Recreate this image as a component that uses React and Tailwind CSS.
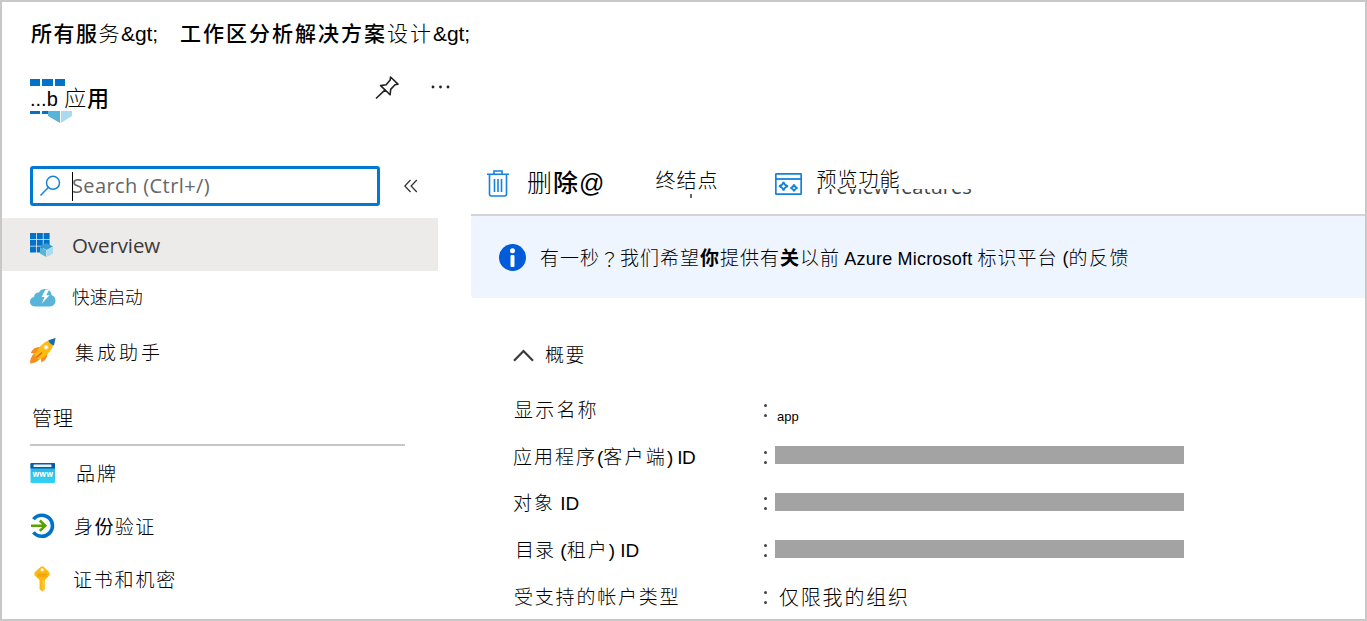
import clsx from 'clsx';

const details = [
  { parts: [['显示名称', 'tracking-[2.2px]']], value: 'app' },
  {
    parts: [
      ['应用程序', 'tracking-[2px] -ml-px'],
      ['(', 'text-[19px] font-normal'],
      ['客户端', 'tracking-[2.2px]'],
      [') ID', 'text-[19px] font-normal tracking-[-0.6px]'],
    ],
  },
  { parts: [['对象', 'tracking-[2px] -ml-px'], [' ID', 'text-[19px] font-normal']] },
  {
    parts: [
      ['目录', 'tracking-[1px] ml-px'],
      [' (', 'text-[19px] font-normal'],
      ['租户', 'tracking-[2px]'],
      [') ID', 'text-[19px] font-normal'],
    ],
  },
  { parts: [['受支持的帐户类型', 'tracking-[1.800px]']], value: '仅限我的组织' },
];

function Parts({ items }) {
  return items.map(([text, className], i) => (
    <span key={i} className={clsx('whitespace-pre', className)}>{text}</span>
  ));
}

function GridIcon() {
  return (
    <svg width="24" height="24" viewBox="0 0 24 24">
      <g fill="#0072c9">
        <path d="M0 0h6v6H0zM6.800 0h6v6h-6zM13.600 0h6v6h-6zM0 6.800h6v6H0zM6.800 6.800h6v6h-6zM13.600 6.800h6v6h-6zM0 13.600h6v6H0zM6.800 13.600h6v6h-6z" />
      </g>
      <path d="M10 13.500l6.500-3.500 6.500 3.500-6.500 3.400z" fill="#349dcb" />
      <path d="M10 13.900l6.200 3.300V24L10 20.600z" fill="#59b4d9" />
      <path d="M23 13.900l-6.200 3.300V24l6.200-3.400z" fill="#a9daed" />
    </svg>
  );
}

function CloudIcon() {
  return (
    <svg width="26" height="20" viewBox="0 0 26 20">
      <path d="M5 18.500c-3 0-5-2-5-4.700C0 11.200 1.700 9.300 4 9c.1-2.900 2.200-4.800 5-4.600C10.200 2 12.500 1 15 1c4 0 6.500 2.700 6.700 6.300C24 8 25.500 10 25.500 12.600c0 3.500-2.500 5.900-5.700 5.900z" fill="#59b4d9" />
      <path d="M15.500 1.500L11.500 9h3L11.800 15.500l7.700-8.300h-3.300l3-5.400z" fill="#fff" />
    </svg>
  );
}

function RocketIcon() {
  return (
    <svg width="26" height="26" viewBox="0 0 26 26">
      <path d="M10.500 9C6 8.500 2.500 10.500.7 15l6 1zM17 15c.8 4-1 7-5.500 9.500L10.500 19z" fill="#f78d1e" />
      <path d="M4.500 15.500C1.500 17.500.2 20.500 0 25.500c4-.3 7.500-1.300 9.800-4.500z" fill="#f78d1e" />
      <path d="M4.500 17.500C8 9.500 14 2.500 25.300.3 23.500 11.500 17.500 18 8.800 21.700z" fill="#fdbb12" />
      <path d="M18.300 2.500L25.500 0 24 7.500c-2.300-.5-4.700-2.400-5.700-5z" fill="#0f6cbd" />
      <circle cx="16" cy="9.300" r="2.200" fill="#fff" stroke="#f6ce62" />
      <path d="M6.500 19.500l5.500-5" stroke="#d9620d" strokeWidth="1.400" />
    </svg>
  );
}

function BrandIcon() {
  return (
    <svg width="26" height="20" viewBox="0 0 26 20">
      <defs>
        <linearGradient id="brand" x1="0" y1="0" x2="0" y2="1">
          <stop offset="0" stopColor="#26aee0" />
          <stop offset="1" stopColor="#32d4f5" />
        </linearGradient>
      </defs>
      <rect x=".5" width="24.500" height="20" rx="1" fill="url(#brand)" />
      <path d="M1.500 0H24a1 1 0 011 1v4.500H.5V1a1 1 0 011-1z" fill="#0a5ba6" />
      <rect x="3.500" y="1.500" width="18" height="2.400" rx=".5" fill="#e8f3fa" />
      <text x="12.800" y="14.200" textAnchor="middle" fontFamily="Open Sans, sans-serif" fontWeight="700" fontSize="8" fill="#fff">www</text>
    </svg>
  );
}

function AuthIcon() {
  return (
    <svg width="26" height="26" viewBox="0 0 26 26" fill="none">
      <path d="M3.500 6.200C5.500 3.500 8.500 2.200 12 2.200a10.500 10.500 0 010 21c-3.500 0-6.500-1.300-8.500-4" stroke="#0072c9" strokeWidth="3.600" />
      <path d="M1 12.700h14M9.800 7.500l5.500 5.200-5.500 5.200" stroke="#57a300" strokeWidth="2.600" />
    </svg>
  );
}

function KeyIcon() {
  return (
    <svg width="26" height="26" viewBox="0 0 26 26">
      <path d="M10.500 1c1-1 2.500-1 3.500 0l5 5c1 1.200 1 2.500 0 3.700L15 14v9l-2.700 2.700L9.500 23v-9L5 9.700C4 8.500 4 7.200 5 6z" fill="#fdb913" />
      <path d="M7.500 7.800h9.500v1H7.500zM7.500 9.600h9.500v.8H7.500z" fill="#eb9a06" />
      <path d="M12.500 14H15v9l-2.500 2z" fill="#ffca3a" />
      <circle cx="12.200" cy="3.800" r="1.600" fill="#fff" />
    </svg>
  );
}

function NavItem({ icon, children, className }) {
  return (
    <div className="h-[53px] pl-7 flex items-center">
      <span className="w-[26px] flex shrink-0">{icon}</span>
      <span className={clsx('whitespace-nowrap', className)}>{children}</span>
    </div>
  );
}

function Sidebar() {
  return (
    <aside className="w-[436px] shrink-0">
      <div className="h-[52px] pl-7 flex items-start">
        <div className="w-[350px] h-10 border-[3px] border-[#0078d4] rounded-[3px] flex items-center">
          <svg className="ml-[7px]" width="22" height="22" viewBox="0 0 22 22" fill="none" stroke="#1683da" strokeWidth="1.500">
            <circle cx="13" cy="7.800" r="6.500" />
            <path d="M8.300 12.500L.5 20.500" />
          </svg>
          <span className="ml-[10px] -mr-px h-[29px] w-px bg-black" />
          <span className="font-['Open_Sans',sans-serif] text-[20px] text-[#666] tracking-[0.4px]">Search (Ctrl+/)</span>
        </div>
        <svg className="ml-[24px] mt-[13px]" width="14" height="14" viewBox="0 0 14 14" fill="none" stroke="#333" strokeWidth="1.300">
          <path d="M6.500 1L.8 7l5.700 6M12.800 1L7.100 7l5.700 6" />
        </svg>
      </div>
      <div className="bg-[#edebe9]">
        <NavItem icon={<GridIcon />} className="ml-4 pt-0.5 font-['Open_Sans',sans-serif] text-[20.500px] text-[#3b3a39] tracking-[-0.1px]">Overview</NavItem>
      </div>
      <NavItem icon={<CloudIcon />} className="ml-4 pt-0.5 text-[17.700px] font-light">快速启动</NavItem>
      <NavItem icon={<RocketIcon />} className="ml-[19px] pt-[5px] text-[19px] font-light tracking-[3px]">集成助手</NavItem>
      <div className="mt-[15px] h-[54px] ml-7 w-[375px] pl-0.5 pt-0.5 flex items-center border-b-2 border-[#c8c6c4] text-[20px] font-light tracking-[1px]">管理</div>
      <NavItem icon={<BrandIcon />} className="ml-5 pt-1 text-[19px] font-light tracking-[2px]">品牌</NavItem>
      <NavItem icon={<AuthIcon />} className="ml-[18px] pt-1 text-[19px] font-light tracking-[1.400px]">身<b>份</b>验证</NavItem>
      <NavItem icon={<KeyIcon />} className="ml-[17px] pt-1 text-[19px] font-light tracking-[1.800px]">证书和机密</NavItem>
    </aside>
  );
}

function Toolbar() {
  return (
    <div className="h-[50px] flex border-b-2 border-[#d4d4d4] relative">
      <svg className="ml-[16px] mt-[4px]" width="22" height="27" viewBox="0 0 22 27" fill="none" stroke="#1683da" strokeWidth="1.600">
        <path d="M0 4.200h22M7 4V1h8v3M2.500 4.500V24q0 2 2 2h13q2 0 2-2V4.500M7.500 9v13M11 9v13M14.500 9v13" />
      </svg>
      <div className="ml-[18px] mt-[3px] h-[28px] flex items-center text-[25px] tracking-[1px]">
        <span className="font-light">删</span>
        <span className="font-medium">除</span>@
      </div>
      <div className="ml-[50px] h-[29px] flex items-center text-[20px] font-light tracking-[1px]">终结点</div>
      <svg className="ml-[57px] mt-[7px]" width="27" height="22" viewBox="0 0 27 22" fill="none" stroke="#1683da" strokeWidth="1.800">
        <rect x=".8" y=".8" width="25.400" height="20.400" rx="1" />
        <path d="M1 6h25" />
        <path d="M8.500 9q.8 3.500 4.500 4.200-3.700.8-4.500 4.300-.8-3.500-4.500-4.300Q7.700 12.500 8.500 9zM19 11.500q.6 2.800 3.500 3.500-2.900.7-3.500 3.300-.6-2.600-3.500-3.300 2.900-.7 3.500-3.500z" />
      </svg>
      <div className="ml-[14px] h-[27px] flex items-center text-[20px] font-light tracking-[1px]">预览功能</div>
      <div className="absolute left-[345px] top-[23px] w-[160px] h-[5px] overflow-hidden">
        <div className="-mt-[14px] leading-6 font-['Open_Sans',sans-serif] text-[20px] text-[#444] whitespace-nowrap">Preview features</div>
      </div>
      <span className="absolute left-[219px] top-[28px] w-0.5 h-1 bg-[#666]" />
    </div>
  );
}

function Essentials() {
  return (
    <section className="pt-[33px]">
      <div className="pl-[42px] h-12 flex items-center text-[19px] font-light tracking-[1.500px]">
        <svg className="-mt-0.5" width="21" height="13" viewBox="0 0 21 13" fill="none" stroke="#3b3a39" strokeWidth="2.200">
          <path d="M1 11.700L10.500 2 20 11.700" />
        </svg>
        <span className="ml-[11px] -mt-px">概要</span>
      </div>
      <div className="pt-[7px]">
        {details.map(({ parts, value }, i) => (
          <div key={i} className="h-[46.8px] flex items-center">
            <div className="w-[248px] pl-[43px] mr-[44px] flex items-center text-[19px] font-light whitespace-nowrap">
              <Parts items={parts} />
            </div>
            <span className="w-3 flex flex-col gap-[7px]">
              <i className="size-[3px] rounded-full bg-[#444] ml-px" />
              <i className="size-[3px] rounded-full bg-[#444] ml-px" />
            </span>
            {!value && <div className="w-[409px] h-[18px] -mt-[4px] bg-[#a3a3a3]" />}
            {value === 'app' && <span className="ml-0.5 mt-[13px] text-[13px]">{value}</span>}
            {value && value !== 'app' && <span className="ml-1 text-[20px] font-light tracking-[1.800px]">{value}</span>}
          </div>
        ))}
      </div>
    </section>
  );
}

export default function App() {
  return (
    <div className="w-[1367px] h-[621px] overflow-hidden border-2 border-[#c8c8c8] bg-white text-black leading-none font-['Liberation_Sans','Noto_Sans_CJK_SC',sans-serif]">
      <header className="h-[164px] pl-[29px]">
        <div className="pt-[18px] h-[44px] flex items-center text-[21px] whitespace-nowrap">
          <Parts
            items={[
              ['所有服', 'font-medium tracking-[1.500px]'],
              ['务', 'font-light tracking-[1.500px]'],
              ['&gt;', 'tracking-[-0.1px]'],
              ['工作区分析解决方案', 'ml-[22px] font-medium tracking-[2px]'],
              ['设计', 'font-light tracking-[2px]'],
              ['&gt;', 'tracking-[-0.1px]'],
            ]}
          />
        </div>
        <div className="-ml-px flex h-[60px] pt-[29px]">
          <div className="relative w-[345px]">
            <svg width="43" height="48" viewBox="0 0 43 48">
              <path d="M0 4h10v8H0zM12 4h11v8H12zM25 4h10v8H25zM0 36h10v3H0zM12 36h9v3h-9z" fill="#0072c9" />
              <path d="M18 36h12v12l-12-7z" fill="#59b4d9" />
              <path d="M31 36h11v5l-11 7z" fill="#a9daed" />
            </svg>
            <div className="absolute left-0 top-[11px] h-[25px] bg-white flex items-center text-[20px] whitespace-pre">
              <span>...b </span>
              <span className="ml-px text-[22px] font-light tracking-[0.5px]">应</span>
              <span className="text-[22px] font-medium">用</span>
            </div>
          </div>
          <svg width="25" height="25" viewBox="0 0 25 25" fill="none" stroke="#222" strokeWidth="1.600" strokeLinejoin="round">
            <path d="M15.500 2l7.500 7.200-3 .6-4.300 4.600-.6 5.400-9.500-9.200 5.500-.8 4.100-4.800zM9.800 15.200L1 23.500" />
          </svg>
          <svg className="ml-[31px] mt-[10px]" width="20" height="4" viewBox="0 0 20 4" fill="#222">
            <circle cx="2" cy="2" r="1.400" /><circle cx="9.500" cy="2" r="1.400" /><circle cx="17" cy="2" r="1.400" />
          </svg>
        </div>
      </header>
      <div className="flex">
        <Sidebar />
        <main className="ml-[33px] flex-1 min-w-0">
          <Toolbar />
          <div className="h-[82px] pl-7 bg-[#eff5ff] rounded-l-[3px] flex items-center text-[18px] whitespace-nowrap">
            <svg width="27" height="27" viewBox="0 0 27 27">
              <circle cx="13.500" cy="13.500" r="13.500" fill="#015cda" />
              <circle cx="13.500" cy="6.800" r="2.500" fill="#fff" />
              <rect x="11.500" y="11" width="4" height="12" rx="1" fill="#fff" />
            </svg>
            <div className="ml-[14px] pt-0.5 flex items-center font-light">
              <Parts
                items={[
                  ['有一秒', 'text-[19px] tracking-[1px]'],
                  ['？', "text-[19px] tracking-[1px] font-['Noto_Sans_CJK_TC',sans-serif]"],
                  ['我们希望', 'text-[19px] tracking-[1px]'],
                  ['你', 'text-[19px] font-bold tracking-[1px]'],
                  ['提供有', 'text-[19px] tracking-[1px]'],
                  ['关', 'text-[19px] font-bold tracking-[1px]'],
                  ['以前', 'text-[19px] tracking-[1px]'],
                  [' Azure Microsoft ', 'pt-0.5 font-normal tracking-[0.200px]'],
                  ['标识平台', 'text-[19px] tracking-[1px]'],
                  [' (', 'font-normal'],
                  ['的反馈', 'text-[19px] tracking-[1.500px]'],
                ]}
              />
            </div>
          </div>
          <div className="pt-px">
            <Essentials />
          </div>
        </main>
      </div>
    </div>
  );
}
